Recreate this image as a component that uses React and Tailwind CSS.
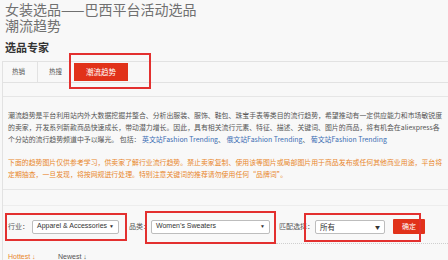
export default function App() {
  return (
    <div className="relative w-[448px] h-[260px] overflow-hidden bg-[#f8f8f8] text-[#555] font-['Noto_Sans_CJK_SC',sans-serif]">
      {/* page title */}
      <div className="pl-[5px] pt-[1px] text-[14px] leading-[16px] text-[#707070] whitespace-nowrap">
        <div>女装选品——巴西平台活动选品</div>
        <div>潮流趋势</div>
      </div>
      <div className="mt-[8px] pl-[5px] h-[13px] text-[11px] leading-[13px] font-bold text-[#333]">选品专家</div>

      <div className="mt-[7px] ml-[2px] border-l border-[#e2e2e2]">
        {/* tabs */}
        <div className="flex items-center h-[22px] border-t border-b border-[#e2e2e2] text-[6.5px] text-[#555]">
          <div className="w-[35px] h-full flex items-center pl-[9px] border-r border-[#e2e2e2]">热销</div>
          <div className="pl-[11px]">热搜</div>
          <div className="ml-[12px] w-[54px] h-[18px] flex items-center justify-center bg-[#e1321a] text-white text-[7.5px]">潮流趋势</div>
        </div>
        <div className="h-[14px] border-b border-[#e6e6e6]" />

        {/* description */}
        <div className="pt-[12px] pl-[5px] text-[6.9px] leading-[12px] whitespace-nowrap">
          <div>潮流趋势是平台利用站内外大数据挖掘并整合、分析出服装、服饰、鞋包、珠宝手表等类目的流行趋势，希望推动有一定供应能力和市场敏锐度</div>
          <div>的卖家，开发系列新款商品快速成长，带动潜力增长。因此，具有相关流行元素、特征、描述、关键词、图片的商品，将有机会在aliexpress各</div>
          <div>
            个分站的流行趋势频道中予以曝光。 包括： <span className="text-[#3a6db3]">英文站Fashion Trending</span>、 <span className="text-[#3a6db3]">俄文站Fashion Trending</span>、 <span className="text-[#3a6db3]">葡文站Fashion Trending</span>
          </div>
          <div className="mt-[11px] text-[#e8872c]">
            <div>下面的趋势图片仅供参考学习，供卖家了解行业流行趋势。禁止卖家复制、使用该等图片或局部图片用于商品发布或任何其他商业用途，平台将</div>
            <div>定期抽查，一旦发现，将按网规进行处理。特别注意关键词的推荐请勿使用任何“品牌词”。</div>
          </div>
        </div>
        <div className="h-[10px] border-b border-[#e6e6e6]" />
        <div className="h-[16px] border-b border-[#ededed]" />

        {/* filters */}
        <div className="pt-[13px] pl-[5px] flex items-center text-[7px] whitespace-nowrap">
          <div className="w-[24px]">行业：</div>
          <div className="w-[87px] h-[14px] flex items-center justify-between px-[4px] bg-white border border-[#bdbdbd] rounded-[2px] text-[#333] font-['Liberation_Sans',sans-serif]">
            <span>Apparel &amp; Accessories</span>
            <span className="text-[5px]">▼</span>
          </div>
          <div className="ml-[10px] w-[22px]">品类：</div>
          <div className="w-[119px] h-[14px] flex items-center justify-between px-[4px] bg-white border border-[#bdbdbd] rounded-[2px] text-[#333] font-['Liberation_Sans',sans-serif]">
            <span>Women’s Sweaters</span>
            <span className="text-[5px]">▼</span>
          </div>
          <div className="ml-[9px] w-[36px]">匹配选择：</div>
          <div className="w-[70px] h-[14px] flex items-center justify-between px-[4px] bg-white border border-[#bdbdbd] rounded-[2px] text-[#333]">
            <span className="text-[7.5px]">所有</span>
            <span className="text-[5px]">▼</span>
          </div>
          <div className="ml-[8px] w-[32px] h-[15px] flex items-center justify-center bg-[#e1321a] text-white rounded-[1px]">确定</div>
        </div>
        <div className="mt-[9px] ml-[273px] border-t border-dotted border-[#cfcfcf]" />

        {/* sort */}
        <div className="mt-[6px] pl-[5px] h-[14px] flex items-center text-[7px] font-['Liberation_Sans',sans-serif]">
          <span className="w-[50px] text-[#e8872c]">Hottest ↓</span>
          <span className="text-[#555]">Newest ↓</span>
        </div>
      </div>

      {/* red annotation boxes */}
      <div className="absolute left-[69px] top-[53px] w-[82px] h-[36px] border-2 border-[#e3302f]" />
      <div className="absolute left-[5px] top-[213px] w-[122px] h-[28px] border-2 border-[#e3302f]" />
      <div className="absolute left-[145px] top-[211px] w-[131px] h-[33px] border-2 border-[#e3302f]" />
      <div className="absolute left-[304px] top-[213px] w-[117px] h-[29px] border-2 border-[#e3302f]" />
    </div>
  )
}
